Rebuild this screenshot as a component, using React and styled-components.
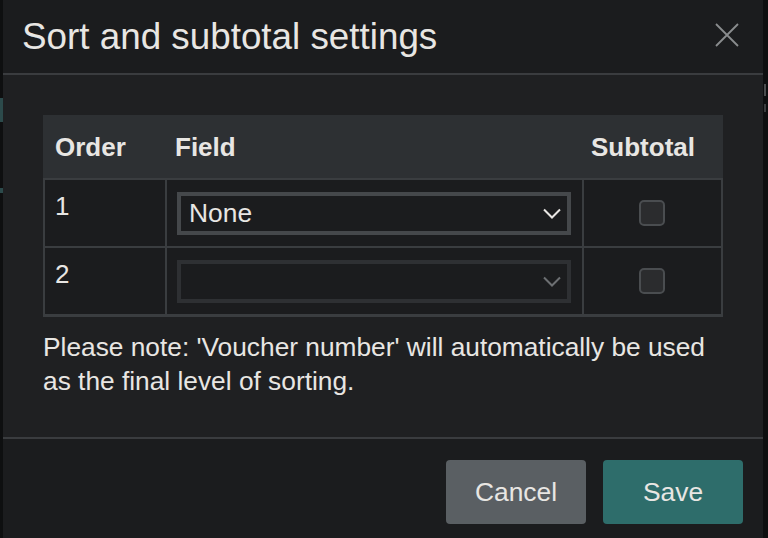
import React from "react";
import styled, { createGlobalStyle } from "styled-components";

const Global = createGlobalStyle`
  html, body { margin: 0; padding: 0; }
  body {
    background: #0e0f10;
    font-family: "Liberation Sans", Arial, Helvetica, sans-serif;
    color: #e8e6e3;
    overflow: hidden;
  }
`;

const Page = styled.div`
  position: relative;
  width: 768px;
  height: 538px;
  overflow: hidden;
  background: #0e0f10;
`;

const Bit = styled.div`
  position: absolute;
  left: ${(p) => p.$x}px;
  top: ${(p) => p.$y}px;
  width: ${(p) => p.$w}px;
  height: ${(p) => p.$h}px;
  background: ${(p) => p.$c};
`;

const Modal = styled.div`
  position: absolute;
  left: 3px;
  top: 0;
  width: 760px;
  height: 560px;
  display: flex;
  flex-direction: column;
  background: #1f2022;
`;

const Header = styled.div`
  height: 73px;
  display: flex;
  align-items: center;
  justify-content: space-between;
  padding: 0 24px 0 19px;
  background: #1b1c1e;
  border-bottom: 2px solid #3a3c3f;
`;

const Title = styled.h1`
  margin: 0;
  font-size: 36.8px;
  font-weight: 400;
  line-height: 44px;
  color: #e8e6e3;
`;

const Close = styled.button`
  width: 24px;
  height: 24px;
  padding: 0;
  border: 0;
  background: transparent;
  display: flex;
  margin-top: -4px;
`;

const Body = styled.div`
  padding: 40px 40px 39px 40px;
  border-bottom: 2px solid #3a3c3f;
`;

const Table = styled.div`
  width: 680px;
`;

const HeadRow = styled.div`
  display: grid;
  grid-template-columns: 122px 417px 141px;
  height: 63px;
  align-items: center;
  background: #2d3033;
`;

const HeadCell = styled.div`
  font-size: 26px;
  font-weight: 700;
  line-height: 30px;
  padding-left: ${(p) => p.$pl}px;
  color: #e8e6e3;
`;

const Grid = styled.div`
  display: grid;
  grid-template-columns: 120px 415px 137px;
  grid-auto-rows: 66px;
  gap: 2px;
  padding: 2px 2px 3px;
  background: #3a3d40;
`;

const Cell = styled.div`
  background: #1b1c1e;
  display: flex;
  align-items: ${(p) => (p.$top ? "flex-start" : "center")};
  justify-content: ${(p) => (p.$center ? "center" : "flex-start")};
  padding: ${(p) => (p.$top ? "11px 10px" : "0 11px 0 10px")};
  font-size: 26px;
  line-height: 30px;
`;

const Select = styled.div`
  box-sizing: border-box;
  width: 100%;
  height: 43px;
  display: flex;
  align-items: center;
  justify-content: space-between;
  padding: 0 6px 0 8px;
  border: 4px solid ${(p) => (p.$disabled ? "#2e3033" : "#45484b")};
  background: #1b1c1e;
  font-size: 26.4px;
  color: #e8e6e3;
`;

const Check = styled.div`
  box-sizing: border-box;
  width: 26px;
  height: 26px;
  border-radius: 5px;
  border: 2px solid #4a4d50;
  background: #2b2c2e;
`;

const Note = styled.p`
  margin: 13px 0 0;
  font-size: 26.3px;
  line-height: 34px;
  color: #e8e6e3;
`;

const Footer = styled.div`
  display: flex;
  justify-content: flex-end;
  gap: 17px;
  padding: 21px 20px 0 0;
  background: #1b1c1e;
  flex: 1;
`;

const Button = styled.button`
  width: 140px;
  height: 64px;
  border: 0;
  border-radius: 4px;
  background: ${(p) => (p.$primary ? "#2e6d6b" : "#5a5f63")};
  color: #e8e6e3;
  font-family: "Liberation Sans", Arial, sans-serif;
  font-size: 26.4px;
  padding: 0;
`;

const Chevron = ({ color }) => (
  <svg width="18" height="11" viewBox="0 0 18 11">
    <polyline points="1,1.5 9,9.5 17,1.5" fill="none" stroke={color} strokeWidth="2" />
  </svg>
);

export default function App() {
  return (
    <Page>
      <Global />
      <Bit $x={0} $y={98} $w={3} $h={24} $c="#2c4a4b" />
      <Bit $x={0} $y={188} $w={3} $h={5} $c="#2c4a4b" />
      <Bit $x={764} $y={84} $w={2} $h={12} $c="#4a4c4e" />
      <Bit $x={764} $y={104} $w={2} $h={8} $c="#3a3c3e" />
      <Modal>
        <Header>
          <Title>Sort and subtotal settings</Title>
          <Close aria-label="Close">
            <svg width="24" height="24" viewBox="0 0 24 24">
              <path d="M1 1L23 23M23 1L1 23" stroke="#8a8c8e" strokeWidth="1.8" fill="none" />
            </svg>
          </Close>
        </Header>
        <Body>
          <Table>
            <HeadRow>
              <HeadCell $pl={12}>Order</HeadCell>
              <HeadCell $pl={10}>Field</HeadCell>
              <HeadCell $pl={9}>Subtotal</HeadCell>
            </HeadRow>
            <Grid>
              <Cell $top>1</Cell>
              <Cell>
                <Select>
                  <span>None</span>
                  <Chevron color="#e8e6e3" />
                </Select>
              </Cell>
              <Cell $center>
                <Check />
              </Cell>
              <Cell $top>2</Cell>
              <Cell>
                <Select $disabled>
                  <span />
                  <Chevron color="#6c6f72" />
                </Select>
              </Cell>
              <Cell $center>
                <Check />
              </Cell>
            </Grid>
          </Table>
          <Note>
            Please note: 'Voucher number' will automatically be used as the final level of sorting.
          </Note>
        </Body>
        <Footer>
          <Button>Cancel</Button>
          <Button $primary>Save</Button>
        </Footer>
      </Modal>
    </Page>
  );
}
